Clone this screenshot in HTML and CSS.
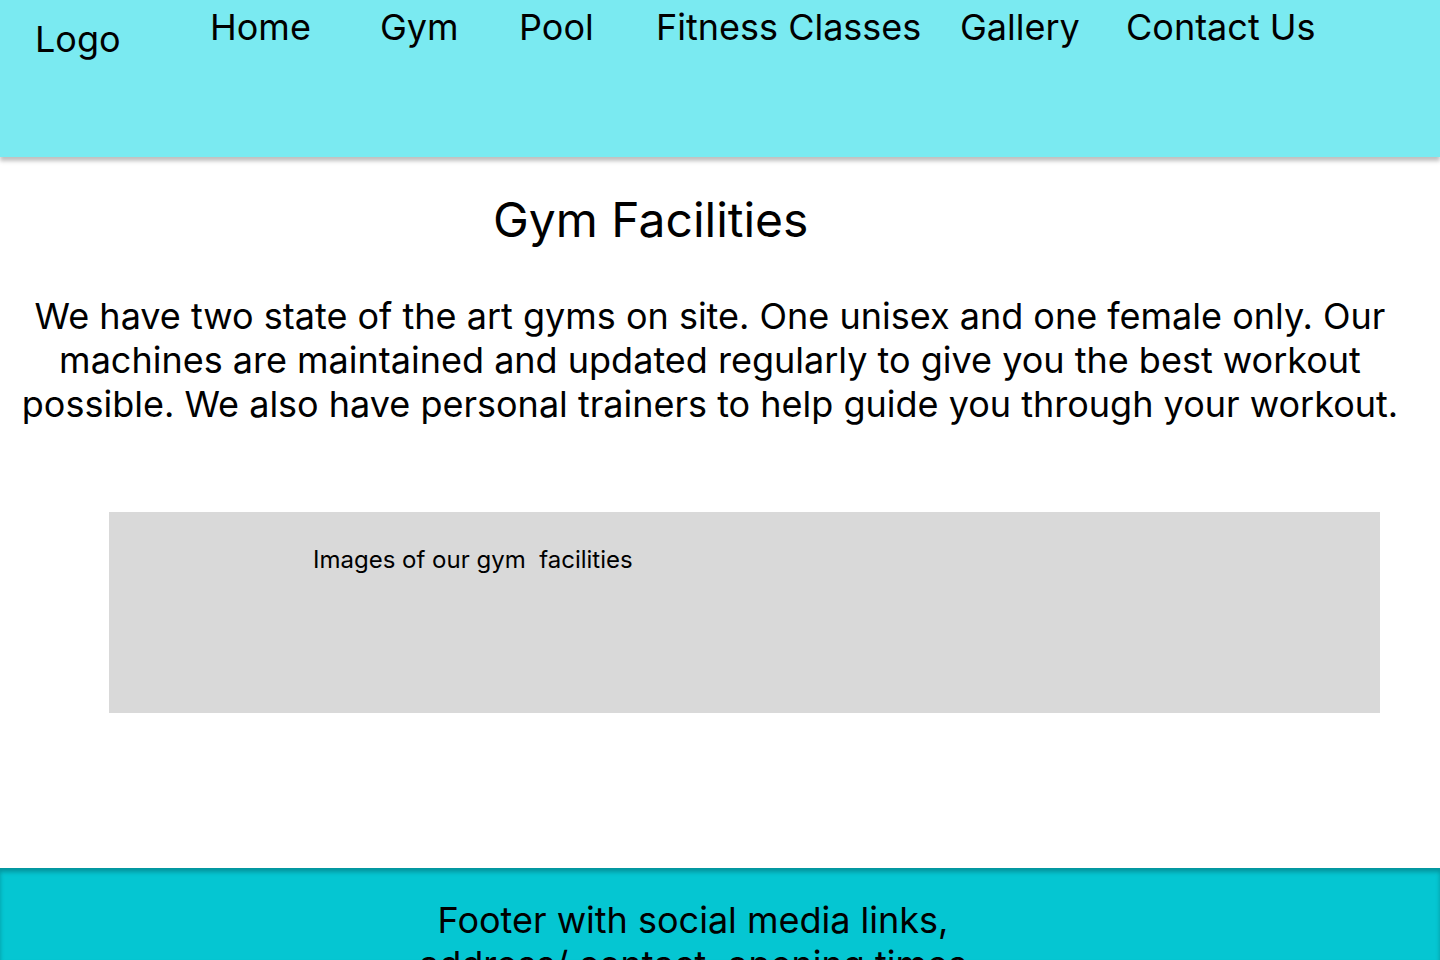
FILE: index.html
```html
<!DOCTYPE html>
<html lang="en">
<head>
<meta charset="utf-8">
<title>Gym Facilities</title>
<link rel="stylesheet" href="styles.css">
</head>
<body>
<header class="site-header">
  <div class="logo">Logo</div>
  <nav class="nav">
    <a class="nav-link" href="#">Home</a>
    <a class="nav-link" href="#">Gym</a>
    <a class="nav-link" href="#">Pool</a>
    <a class="nav-link" href="#">Fitness Classes</a>
    <a class="nav-link" href="#">Gallery</a>
    <a class="nav-link" href="#">Contact Us</a>
  </nav>
</header>
<main class="main">
  <h1 class="title">Gym Facilities</h1>
  <p class="intro">We have two state of the art gyms on site. One unisex and one female only. Our machines are maintained and updated regularly to give you the best workout possible. We also have personal trainers to help guide you through your workout.</p>
  <section class="gallery">
    <p class="gallery-label">Images of our gym&nbsp; facilities</p>
  </section>
</main>
<footer class="site-footer">
  <p class="footer-text">Footer with social media links,<br>address/ contact, opening times</p>
</footer>
</body>
</html>
```
FILE: styles.css
```css
* { box-sizing: border-box; }
html, body { margin: 0; padding: 0; }
body {
  width: 1440px;
  height: 960px;
  overflow: hidden;
  font-family: Inter, "Noto Sans", sans-serif;
  color: #000;
  background: #fff;
  display: flex;
  flex-direction: column;
}
.site-header {
  height: 157px;
  background: #7aeaf1;
  box-shadow: 0 4px 4px rgba(0,0,0,0.25);
  display: flex;
  align-items: flex-start;
  position: relative;
  z-index: 1;
  flex-shrink: 0;
}
.logo {
  width: 210px;
  padding-left: 35px;
  padding-top: 17px;
  font-size: 36px;
  line-height: 44px;
}
.nav {
  display: grid;
  grid-template-columns: 170px 139px 137px 304px 166px auto;
  padding-top: 5px;
}
.nav-link {
  color: #000;
  text-decoration: none;
  font-size: 36px;
  line-height: 44px;
}
.main {
  flex: 1;
  display: flex;
  flex-direction: column;
}
.title {
  margin: 0;
  padding-top: 191px;
  font-size: 48px;
  font-weight: 400;
  line-height: 58px;
  padding-left: 493px;
  margin-top: -157px;
}
.intro {
  margin: 45px 40px 0 20px;
  font-size: 36px;
  line-height: 44px;
  text-align: center;
}
.gallery {
  margin: 86px 60px 0 109px;
  height: 201px;
  background: #d9d9d9;
  padding: 33px 0 0 204px;
}
.gallery-label {
  margin: 0;
  font-size: 24px;
  line-height: 29px;
}
.site-footer {
  height: 92px;
  flex-shrink: 0;
  background: #05c6d2;
  box-shadow: inset 0 4px 4px rgba(0,0,0,0.25);
  text-align: center;
  padding-top: 30px;
  overflow: hidden;
}
.footer-text {
  margin: 0;
  padding-right: 54px;
  font-size: 36px;
  line-height: 44px;
}
```
